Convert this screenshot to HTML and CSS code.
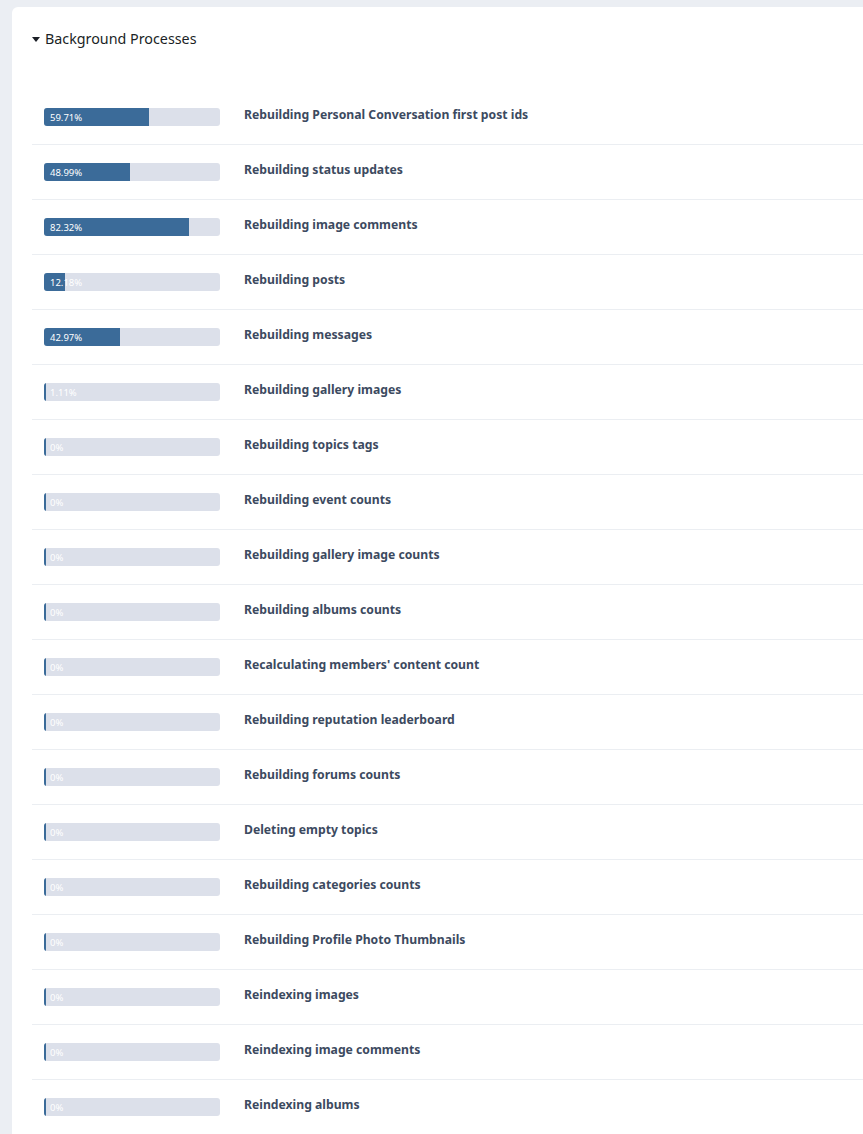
FILE: index.html
```html
<!DOCTYPE html>
<html lang="en">
<head>
    <meta charset="UTF-8">
    <meta name="viewport" content="width=device-width, initial-scale=1.0">
    <title>Background Processes</title>
    <link rel="stylesheet" href="styles.css">
</head>
<body>
    <div class="card">
        <h2 class="heading"><span class="caret"></span>Background Processes</h2>
        <ul class="tasks">
            <li class="task">
                <div class="bar"><div class="fill" style="width: 59.71%"></div><span class="pct">59.71%</span></div>
                <div class="title">Rebuilding Personal Conversation first post ids</div>
            </li>
            <li class="task">
                <div class="bar"><div class="fill" style="width: 48.99%"></div><span class="pct">48.99%</span></div>
                <div class="title">Rebuilding status updates</div>
            </li>
            <li class="task">
                <div class="bar"><div class="fill" style="width: 82.32%"></div><span class="pct">82.32%</span></div>
                <div class="title">Rebuilding image comments</div>
            </li>
            <li class="task">
                <div class="bar"><div class="fill" style="width: 12.18%"></div><span class="pct">12.18%</span></div>
                <div class="title">Rebuilding posts</div>
            </li>
            <li class="task">
                <div class="bar"><div class="fill" style="width: 42.97%"></div><span class="pct">42.97%</span></div>
                <div class="title">Rebuilding messages</div>
            </li>
            <li class="task">
                <div class="bar"><div class="fill" style="width: 1.11%"></div><span class="pct">1.11%</span></div>
                <div class="title">Rebuilding gallery images</div>
            </li>
            <li class="task">
                <div class="bar"><div class="fill" style="width: 0%"></div><span class="pct">0%</span></div>
                <div class="title">Rebuilding topics tags</div>
            </li>
            <li class="task">
                <div class="bar"><div class="fill" style="width: 0%"></div><span class="pct">0%</span></div>
                <div class="title">Rebuilding event counts</div>
            </li>
            <li class="task">
                <div class="bar"><div class="fill" style="width: 0%"></div><span class="pct">0%</span></div>
                <div class="title">Rebuilding gallery image counts</div>
            </li>
            <li class="task">
                <div class="bar"><div class="fill" style="width: 0%"></div><span class="pct">0%</span></div>
                <div class="title">Rebuilding albums counts</div>
            </li>
            <li class="task">
                <div class="bar"><div class="fill" style="width: 0%"></div><span class="pct">0%</span></div>
                <div class="title">Recalculating members' content count</div>
            </li>
            <li class="task">
                <div class="bar"><div class="fill" style="width: 0%"></div><span class="pct">0%</span></div>
                <div class="title">Rebuilding reputation leaderboard</div>
            </li>
            <li class="task">
                <div class="bar"><div class="fill" style="width: 0%"></div><span class="pct">0%</span></div>
                <div class="title">Rebuilding forums counts</div>
            </li>
            <li class="task">
                <div class="bar"><div class="fill" style="width: 0%"></div><span class="pct">0%</span></div>
                <div class="title">Deleting empty topics</div>
            </li>
            <li class="task">
                <div class="bar"><div class="fill" style="width: 0%"></div><span class="pct">0%</span></div>
                <div class="title">Rebuilding categories counts</div>
            </li>
            <li class="task">
                <div class="bar"><div class="fill" style="width: 0%"></div><span class="pct">0%</span></div>
                <div class="title">Rebuilding Profile Photo Thumbnails</div>
            </li>
            <li class="task">
                <div class="bar"><div class="fill" style="width: 0%"></div><span class="pct">0%</span></div>
                <div class="title">Reindexing images</div>
            </li>
            <li class="task">
                <div class="bar"><div class="fill" style="width: 0%"></div><span class="pct">0%</span></div>
                <div class="title">Reindexing image comments</div>
            </li>
            <li class="task">
                <div class="bar"><div class="fill" style="width: 0%"></div><span class="pct">0%</span></div>
                <div class="title">Reindexing albums</div>
            </li>
        </ul>
    </div>
</body>
</html>
```

FILE: styles.css
```css
*{
    margin: 0;
    padding: 0;
    box-sizing: border-box;
}

body{
    background: #ebeef3;
    font-family: "Noto Sans", "Open Sans", sans-serif;
    overflow: hidden;
}

.card{
    background: #fff;
    margin: 7px 0 0 12px;
    padding: 20px 0 0 20px;
    border-radius: 6px 0 0 0;
    min-height: 1200px;
}

.heading{
    display: flex;
    align-items: center;
    font-size: 14.3px;
    font-weight: normal;
    color: #1b1f26;
    line-height: 24px;
    height: 24px;
    margin-bottom: 39px;
}

.caret{
    width: 0;
    height: 0;
    border-left: 4px solid transparent;
    border-right: 4px solid transparent;
    border-top: 5px solid #1b1f26;
    margin-right: 5px;
}

.tasks{
    list-style: none;
}

.task{
    display: flex;
    align-items: flex-start;
    padding: 18px 0 18px 12px;
    border-bottom: 1px solid #ebeef2;
}

.bar{
    position: relative;
    width: 176px;
    height: 18px;
    background: #dce0ea;
    border-radius: 3px;
    overflow: hidden;
    flex-shrink: 0;
}

.fill{
    height: 100%;
    min-width: 2px;
    background: #3b6b99;
}

.pct{
    position: absolute;
    left: 6px;
    top: 0;
    line-height: 19px;
    font-size: 9.5px;
    color: #fff;
}

.title{
    margin-left: 24px;
    font-size: 12.2px;
    font-weight: bold;
    color: #3c4a60;
    line-height: 14px;
}
```
